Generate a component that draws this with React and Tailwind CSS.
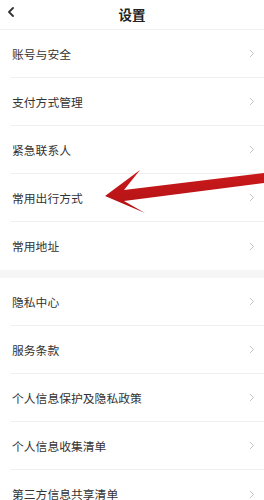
import React from "react";

const font = { fontFamily: '"Noto Sans CJK SC", "Noto Sans", sans-serif' };

function Chevron() {
  return (
    <svg width="6" height="9" viewBox="0 0 6 9" className="shrink-0">
      <path d="M1.2 1.2 L4.5 4.5 L1.2 7.8" fill="none" stroke="#c4c4c4" strokeWidth="1" strokeLinecap="round" strokeLinejoin="round" />
    </svg>
  );
}

function Row({ label, last }) {
  return (
    <div className="pl-[11px]">
      <div className={`h-[48px] flex items-center justify-between pr-[9px] ${last ? "" : "border-b border-[#efefef]"}`}>
        <span className="text-[11.8px] text-[#333] leading-none pl-[1px]">{label}</span>
        <Chevron />
      </div>
    </div>
  );
}

export default function App() {
  const g1 = ["账号与安全", "支付方式管理", "紧急联系人", "常用出行方式", "常用地址"];
  const g2 = ["隐私中心", "服务条款", "个人信息保护及隐私政策", "个人信息收集清单", "第三方信息共享清单"];
  return (
    <div className="relative w-[264px] h-[500px] overflow-hidden bg-white" style={font}>
      <div className="h-[30px] flex items-center justify-center relative border-b border-[#f0f0f0]">
        <svg width="8" height="10" viewBox="0 0 8 10" className="absolute left-[7px] top-[7px]">
          <path d="M6 1 L2 5 L6 9" fill="none" stroke="#333" strokeWidth="1.8" strokeLinecap="round" strokeLinejoin="round" />
        </svg>
        <span className="text-[13.5px] font-bold text-[#222] leading-none">设置</span>
      </div>
      <div>
        {g1.map((l, i) => (
          <Row key={l} label={l} last={i === g1.length - 1} />
        ))}
      </div>
      <div className="h-[8px] bg-[#f6f6f7]" />
      <div>
        {g2.map((l, i) => (
          <Row key={l} label={l} last={i === g2.length - 1} />
        ))}
      </div>
      <svg className="absolute left-0 top-0 pointer-events-none" width="264" height="500" viewBox="0 0 264 500">
        <defs>
          <linearGradient id="ar" x1="0" y1="0" x2="0" y2="1">
            <stop offset="0" stopColor="#cc1a1c" />
            <stop offset="1" stopColor="#b01215" />
          </linearGradient>
        </defs>
        <polygon
          points="105,196 140,170 124,190 264,173 264,183 124,201 145,213"
          fill="url(#ar)"
        />
      </svg>
    </div>
  );
}
